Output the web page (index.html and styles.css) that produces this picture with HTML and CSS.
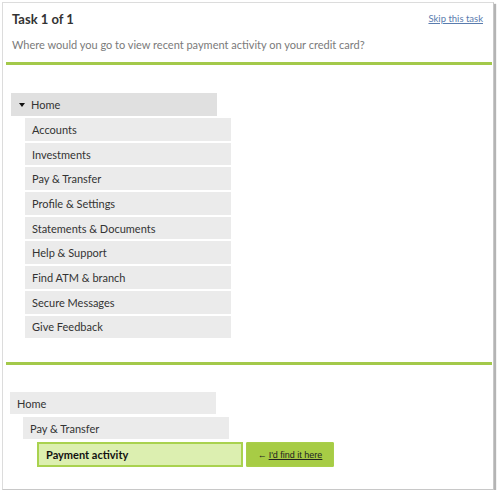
FILE: index.html
```html
<!DOCTYPE html>
<html>
<head>
<meta charset="utf-8">
<link rel="stylesheet" href="styles.css">
</head>
<body>
<div class="frame">
  <header class="head">
    <div class="head-top">
      <h1 class="title">Task 1 of 1</h1>
      <a class="skip" href="#">Skip this task</a>
    </div>
    <p class="question">Where would you go to view recent payment activity on your credit card?</p>
  </header>
  <div class="rule"></div>
  <section class="tree">
    <div class="row root"><span class="caret"></span>Home</div>
    <div class="children">
      <div class="row child">Accounts</div>
      <div class="row child">Investments</div>
      <div class="row child">Pay &amp; Transfer</div>
      <div class="row child">Profile &amp; Settings</div>
      <div class="row child">Statements &amp; Documents</div>
      <div class="row child">Help &amp; Support</div>
      <div class="row child">Find ATM &amp; branch</div>
      <div class="row child">Secure Messages</div>
      <div class="row child">Give Feedback</div>
    </div>
  </section>
  <div class="rule"></div>
  <section class="path">
    <div class="row crumb lvl0">Home</div>
    <div class="row crumb lvl1">Pay &amp; Transfer</div>
    <div class="final">
      <div class="row selected">Payment activity</div>
      <button class="found"><span class="arrow">&larr;</span><span class="found-label">I'd find it here</span></button>
    </div>
  </section>
</div>
</body>
</html>
```
FILE: styles.css
```css
* { box-sizing: border-box; }
html, body { margin: 0; padding: 0; background: #ffffff; }
body { font-family: Lato, "Open Sans", sans-serif; color: #333; }

.frame {
  margin: 2px 0 0 2px;
  width: 492px;
  height: 488px;
  border: 1px solid #dcdcdc;
  border-right: 1px solid #c8c8c8;
  border-bottom: 1px solid #c8c8c8;
  box-shadow: 2px 2px 1px #b4b4b4;
  background: #fff;
  display: flex;
  flex-direction: column;
}

.head { padding: 8px 10px 0 9px; }
.head-top { display: flex; justify-content: space-between; align-items: flex-start; }
.title { margin: 0; font-size: 13px; font-weight: 700; color: #333; line-height: 16px; }
.skip { font-size: 9.5px; color: #5a7cae; text-decoration: underline; margin-top: 2px; margin-right: 0; }
.question { margin: 11px 0 0; font-size: 11px; color: #7a7a7a; line-height: 14px; }

.rule { height: 3px; background: #a3c94a; margin: 10px 1px 0 3px; flex: none; }

.tree { padding: 28px 0 0 8px; height: 287px; flex: none; }
.row { font-size: 11px; color: #333; display: flex; align-items: center; width: 206px; }
.root { height: 23px; background: #e0e0e0; padding-left: 8px; }
.caret {
  width: 0; height: 0;
  border-left: 3.5px solid transparent;
  border-right: 3.5px solid transparent;
  border-top: 4px solid #111;
  margin-right: 6px;
}
.children { padding-left: 14px; padding-top: 2px; display: flex; flex-direction: column; gap: 2px; }
.child { height: 22.7px; background: #ebebeb; padding-left: 7px; }

.path { padding: 27px 0 0 7px; display: flex; flex-direction: column; gap: 3px; }
.crumb { height: 22px; background: #ebebeb; padding-left: 7px; }
.lvl1 { margin-left: 13px; }
.final { display: flex; gap: 3px; margin-left: 27px; }
.selected { height: 25px; background: #dcefb0; border: 2px solid #a9d24f; padding-left: 7px; font-weight: 700; color: #111; }
.found {
  height: 25px; width: 88px; border: 1px solid #a9cf4a; background: #a7cc45; border-radius: 1px;
  font-family: "Liberation Sans", sans-serif; font-size: 9px; color: #222;
  display: flex; align-items: center; justify-content: center; padding: 0; gap: 2px;
}
.arrow { font-size: 9px; }
.found-label { text-decoration: underline; }
```
